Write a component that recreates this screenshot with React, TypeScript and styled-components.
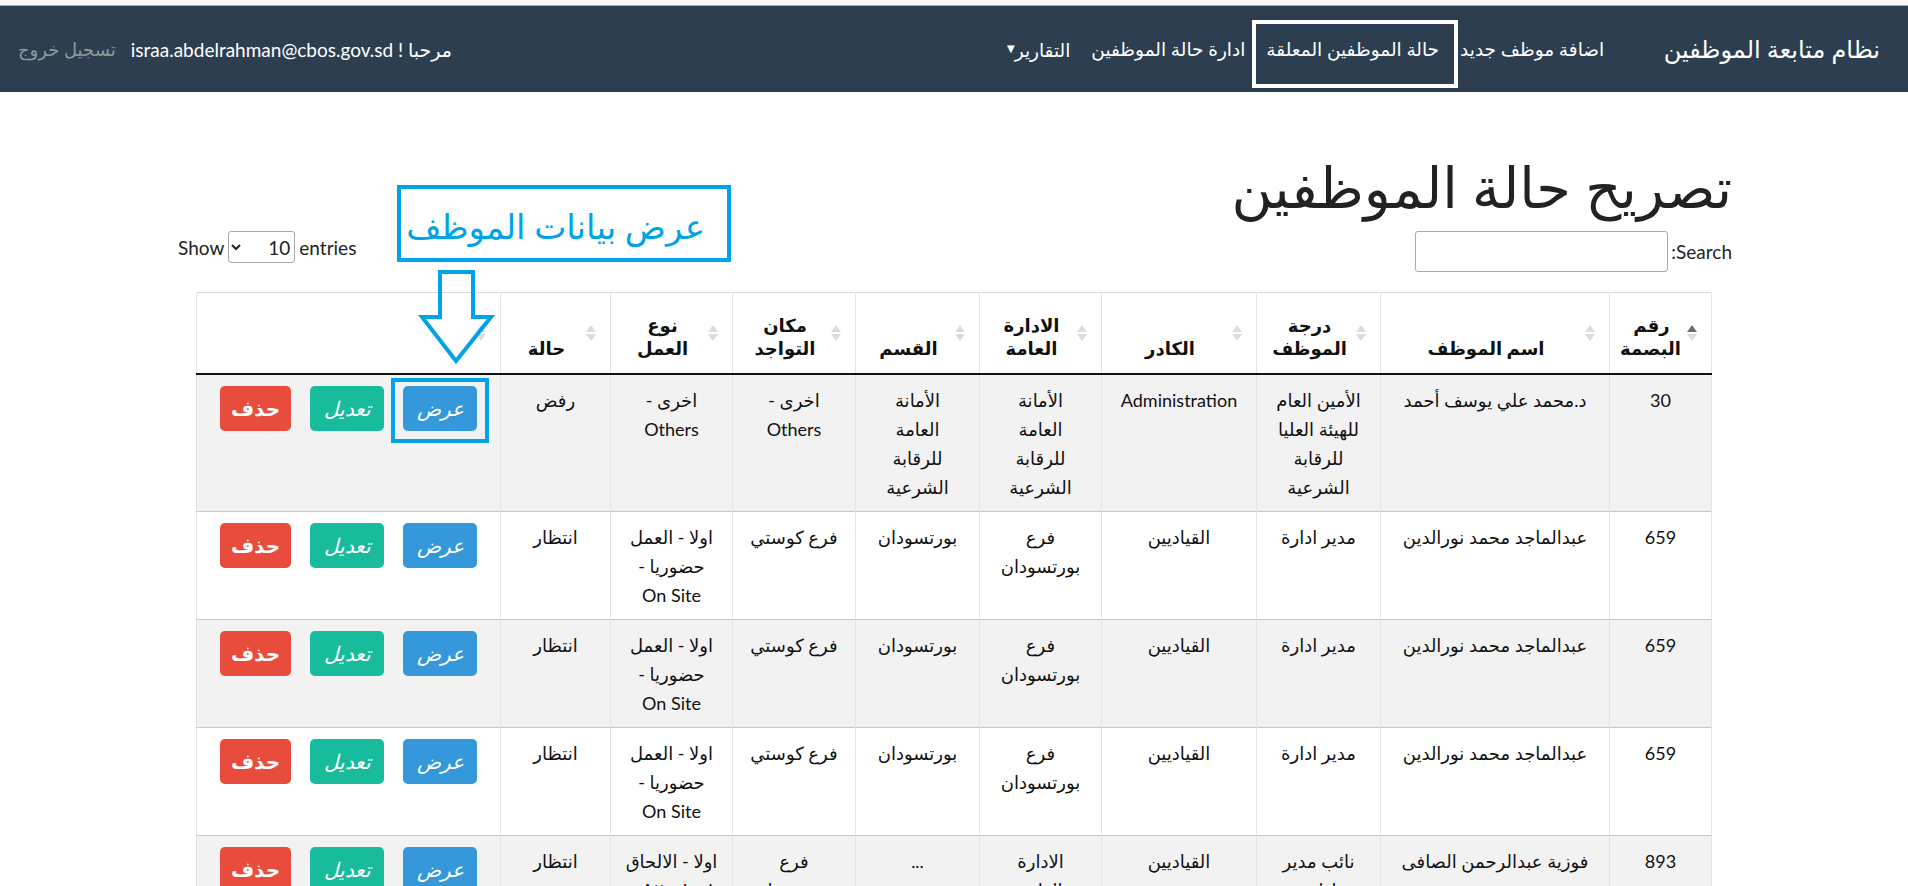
import React from "react";
import styled, { createGlobalStyle, css } from "styled-components";

const FONT = `Lato, "DejaVu Sans", sans-serif`;
const MARK = "#00a2e8";

const Global = createGlobalStyle`
  html, body { margin: 0; padding: 0; background: #ffffff; }
  body { font-family: ${FONT}; color: #222; }
  * { box-sizing: border-box; }
`;

const Page = styled.div`
  position: relative;
  width: 1908px;
  height: 886px;
  overflow: hidden;
  direction: rtl;
`;

const TopStrip = styled.div`
  height: 6px;
  background: #f8f9fa;
  border-bottom: 1px solid #a8a8a8;
`;

const Navbar = styled.nav`
  height: 86px;
  background: #2c3e50;
  display: flex;
  align-items: center;
  padding: 0 28px 0 18px;
  color: #fff;
`;

const Brand = styled.div`
  font-size: 24px;
  line-height: 30px;
  margin-left: 49px;
  white-space: nowrap;
`;

const NavLinks = styled.ul`
  list-style: none;
  display: flex;
  align-items: center;
  margin: 0;
  padding: 0;
  flex: 1;
`;

const NavLink = styled.li<{ $marked?: boolean }>`
  position: relative;
  font-size: 18.5px;
  line-height: 28px;
  padding: 0 10.5px;
  white-space: nowrap;
  ${(p) =>
    p.$marked &&
    css`
      &::after {
        content: "";
        position: absolute;
        top: -15px;
        bottom: -25px;
        right: -8px;
        left: -4px;
        border: 4px solid #ffffff;
      }
    `}
`;

const Caret = styled.span`
  font-size: 10px;
  vertical-align: 5px;
`;

const UserArea = styled.div`
  display: flex;
  align-items: center;
  gap: 15px;
  font-size: 19px;
  white-space: nowrap;
`;

const Logout = styled.span`
  color: #8e9a9d;
  font-size: 18px;
`;

const Main = styled.main`
  padding: 0 176px 0 178px;
`;

const Title = styled.h1`
  margin: 61px 0 10px 0;
  font-size: 56px;
  font-weight: 400;
  line-height: 67px;
  color: #222;
`;

const Controls = styled.div`
  display: flex;
  justify-content: space-between;
  align-items: flex-start;
  height: 43px;
  margin-bottom: 19px;
`;

const SearchLabel = styled.label`
  display: flex;
  align-items: center;
  gap: 3px;
  font-size: 19px;
  padding-top: 1px;
`;

const SearchInput = styled.input`
  width: 253px;
  height: 41px;
  border: 1px solid #aaa;
  border-radius: 3px;
  background: #fff;
  font: inherit;
`;

const LengthLabel = styled.label`
  direction: ltr;
  display: flex;
  align-items: center;
  gap: 4px;
  font-size: 19px;
  padding-top: 1px;
`;

const LengthSelect = styled.select`
  width: 67px;
  height: 32px;
  border: 1px solid #aaa;
  border-radius: 3px;
  background: #fff;
  font-family: ${FONT};
  font-size: 19px;
  color: #222;
`;

const TableWrap = styled.div`
  padding: 0 20px 0 19px;
`;

const Table = styled.table`
  width: 1515px;
  table-layout: fixed;
  border-collapse: collapse;
  border-top: 1px solid #dcdcdc;
  border-left: 1px solid #e3e3e3;
  border-right: 1px solid #e3e3e3;
`;

const Col = styled.col<{ $w: number }>`
  width: ${(p) => p.$w}px;
`;

const Th = styled.th`
  position: relative;
  font-size: 18px;
  font-weight: 700;
  line-height: 23px;
  padding: 21px 30px 13px 12px;
  vertical-align: bottom;
  text-align: center;
  white-space: pre-line;
  border-right: 1px solid #e3e3e3;
  border-bottom: 2px solid #111;
  color: #111;
`;

const SortIcon = styled.span<{ $asc?: boolean }>`
  position: absolute;
  right: 14px;
  top: 50%;
  margin-top: -8px;
  width: 10px;
  height: 16px;
  &::before,
  &::after {
    content: "";
    position: absolute;
    left: 0;
    border-left: 5px solid transparent;
    border-right: 5px solid transparent;
  }
  &::before {
    top: 0;
    border-bottom: 7px solid ${(p) => (p.$asc ? "#6b6b6b" : "#dcdcdc")};
  }
  &::after {
    bottom: 0;
    border-top: 7px solid #dcdcdc;
  }
`;

const Tr = styled.tr<{ $odd: boolean }>`
  background: ${(p) => (p.$odd ? "#f2f2f2" : "#ffffff")};
  border-top: 1px solid #c8c8c8;
  &:first-child {
    border-top: none;
  }
`;

const Td = styled.td`
  font-size: 18px;
  line-height: 29px;
  padding: 11px 6px 9px 6px;
  vertical-align: top;
  text-align: center;
  white-space: pre-line;
  border-right: 1px solid #e3e3e3;
  color: #111;
`;

const Actions = styled.div`
  display: flex;
  justify-content: center;
  gap: 19px;
`;

const BtnWrap = styled.span<{ $marked?: boolean }>`
  position: relative;
  display: inline-flex;
  ${(p) =>
    p.$marked &&
    css`
      &::after {
        content: "";
        position: absolute;
        top: -8px;
        bottom: -12px;
        left: -12px;
        right: -12px;
        border: 4px solid ${MARK};
      }
    `}
`;

const Btn = styled.button<{ $kind: "view" | "edit" | "del" }>`
  height: 45px;
  min-width: ${(p) => (p.$kind === "del" ? 71 : 74)}px;
  padding: 0 10px;
  border: none;
  border-radius: 5px;
  color: #fff;
  font-family: ${FONT};
  font-size: 20px;
  background: ${(p) =>
    p.$kind === "view" ? "#3498db" : p.$kind === "edit" ? "#18bc9c" : "#e74c3c"};
  font-style: ${(p) => (p.$kind === "del" ? "normal" : "italic")};
  font-weight: ${(p) => (p.$kind === "del" ? 700 : 400)};
`;

const Callout = styled.div`
  position: absolute;
  left: 397px;
  top: 185px;
  width: 334px;
  height: 77px;
  border: 4px solid ${MARK};
  color: ${MARK};
  font-size: 34px;
  display: flex;
  align-items: center;
  justify-content: flex-start;
  padding: 4px 22px 0 0;
  background: #fff;
`;

const ArrowSvg = styled.svg`
  position: absolute;
  left: 418px;
  top: 268px;
`;

const headers = [
  "رقم\nالبصمة",
  "اسم الموظف",
  "درجة\nالموظف",
  "الكادر",
  "الادارة\nالعامة",
  "القسم",
  "مكان\nالتواجد",
  "نوع\nالعمل",
  "حالة",
  "",
];

const widths = [102, 229, 124, 155, 122, 124, 123, 122, 110, 304];

const repeated = [
  "659",
  "عبدالماجد محمد نورالدين",
  "مدير ادارة",
  "القياديين",
  "فرع\nبورتسودان",
  "بورتسودان",
  "فرع كوستي",
  "اولا - العمل\nحضوريا -\nOn Site",
  "انتظار",
];

const rows: string[][] = [
  [
    "30",
    "د.محمد علي يوسف أحمد",
    "الأمين العام\nللهيئة العليا\nللرقابة\nالشرعية",
    "Administration",
    "الأمانة\nالعامة\nللرقابة\nالشرعية",
    "الأمانة\nالعامة\nللرقابة\nالشرعية",
    "اخرى -\nOthers",
    "اخرى -\nOthers",
    "رفض",
  ],
  repeated,
  repeated,
  repeated,
  [
    "893",
    "فوزية عبدالرحمن الصافى",
    "نائب مدير\nادارة",
    "القياديين",
    "الادارة\nالعامة\nللرقابة",
    "...",
    "فرع\nبورتسودان",
    "اولا - الالحاق\nAttached -\nانتداب",
    "انتظار",
  ],
];

export default function App() {
  return (
    <Page>
      <Global />
      <TopStrip />
      <Navbar>
        <Brand>نظام متابعة الموظفين</Brand>
        <NavLinks>
          <NavLink>اضافة موظف جديد</NavLink>
          <NavLink $marked>حالة الموظفين المعلقة</NavLink>
          <NavLink>ادارة حالة الموظفين</NavLink>
          <NavLink>
            التقارير<Caret>▼</Caret>
          </NavLink>
        </NavLinks>
        <UserArea>
          <span>مرحبا ! israa.abdelrahman@cbos.gov.sd</span>
          <Logout>تسجيل خروج</Logout>
        </UserArea>
      </Navbar>
      <Main>
        <Title>تصريح حالة الموظفين</Title>
        <Controls>
          <SearchLabel>
            Search:
            <SearchInput type="search" />
          </SearchLabel>
          <LengthLabel>
            Show
            <LengthSelect dir="rtl" defaultValue="10">
              <option value="10">10</option>
              <option value="25">25</option>
            </LengthSelect>
            entries
          </LengthLabel>
        </Controls>
        <TableWrap>
          <Table>
            <colgroup>
              {widths.map((w, i) => (
                <Col key={i} $w={w} />
              ))}
            </colgroup>
            <thead>
              <tr>
                {headers.map((h, i) => (
                  <Th key={i}>
                    {h}
                    <SortIcon $asc={i === 0} />
                  </Th>
                ))}
              </tr>
            </thead>
            <tbody>
              {rows.map((r, ri) => (
                <Tr key={ri} $odd={ri % 2 === 0}>
                  {r.map((c, ci) => (
                    <Td key={ci}>{c}</Td>
                  ))}
                  <Td>
                    <Actions>
                      <BtnWrap $marked={ri === 0}>
                        <Btn $kind="view">عرض</Btn>
                      </BtnWrap>
                      <BtnWrap>
                        <Btn $kind="edit">تعديل</Btn>
                      </BtnWrap>
                      <BtnWrap>
                        <Btn $kind="del">حذف</Btn>
                      </BtnWrap>
                    </Actions>
                  </Td>
                </Tr>
              ))}
            </tbody>
          </Table>
        </TableWrap>
      </Main>
      <Callout>عرض بيانات الموظف</Callout>
      <ArrowSvg width="78" height="100" viewBox="0 0 78 100">
        <polygon
          points="22,4 55,4 55,49 73,49 38,93 4,49 22,49"
          fill="none"
          stroke={MARK}
          strokeWidth="4"
          strokeLinejoin="miter"
        />
      </ArrowSvg>
    </Page>
  );
}
